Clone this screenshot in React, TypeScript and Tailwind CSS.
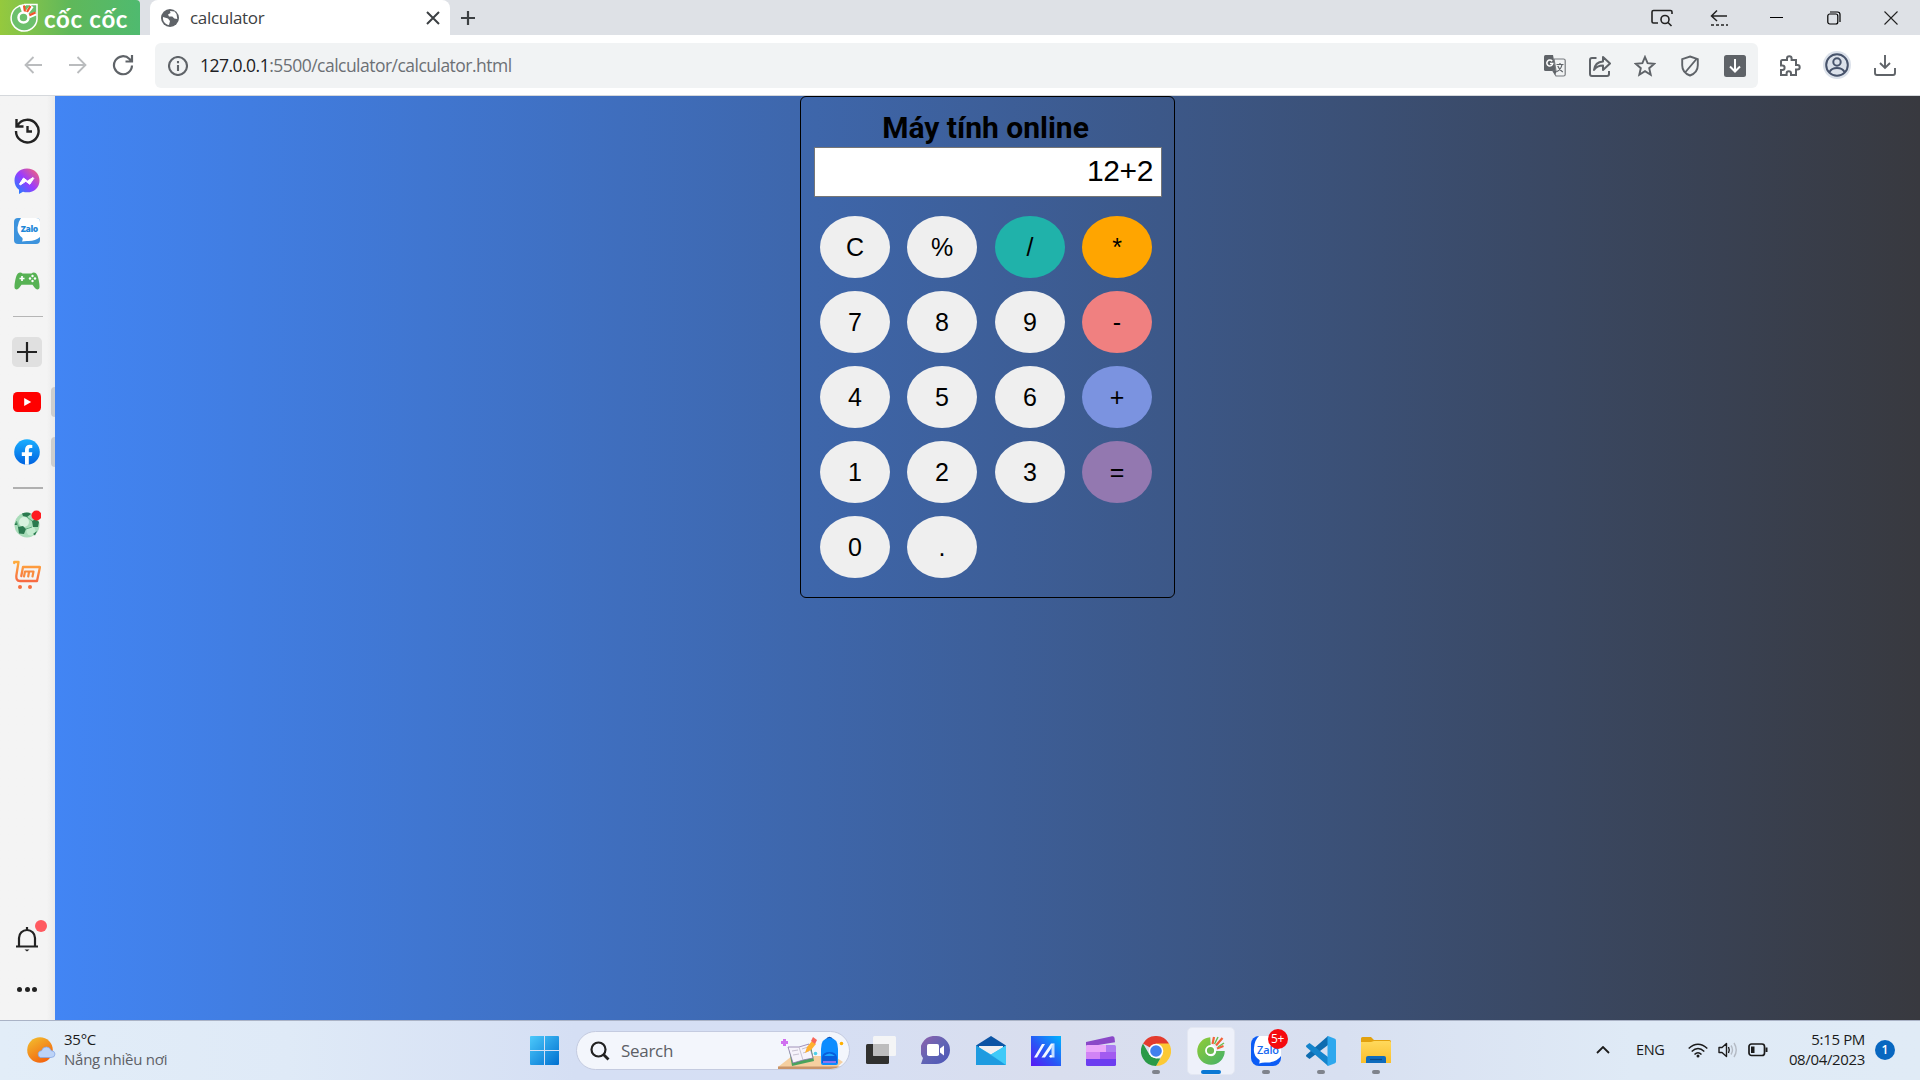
import React from "react";

type Children = { children?: React.ReactNode };

const UI = "font-['Open_Sans','Noto_Sans',sans-serif]";

function Cell({ children, className = "" }: Children & { className?: string }) {
  return <div className={`flex shrink-0 items-center justify-center ${className}`}>{children}</div>;
}

type IconProps = Children & { w?: number; h?: number; sw?: number; color?: string };

function Line({ children, w = 24, h = 24, sw = 2, color = "#5f6368" }: IconProps) {
  return (
    <svg width={w} height={h} viewBox={`0 0 ${w} ${h}`} fill="none" stroke={color} strokeWidth={sw} className="block shrink-0">
      {children}
    </svg>
  );
}

function CocCocLogo() {
  return (
    <div className="flex h-[35px] w-[140px] shrink-0 items-center rounded-tr-[4px] bg-linear-to-r from-[#95c93d] via-[#5fb85a] to-[#4fba6f] pl-[9px]">
      <svg width="30" height="30" viewBox="0 0 30 30" fill="none" className="shrink-0">
        <path d="M17 2.2A13 13 0 1 0 28 13.500L28 1.500H15" stroke="#fff" strokeWidth="1.500" fill="#6cc06c" />
        <path d="M12.500 2L15 9M27 10.500L20 13.500M23 3L17.500 10" stroke="#fff" strokeWidth="4" />
        <path d="M15 2.500L16 9M26.500 9.500L20 12.500M21.500 3L18 9" stroke="#f0532b" strokeWidth="2.200" />
        <circle cx="14.500" cy="14.500" r="5" stroke="#fff" strokeWidth="2.500" />
      </svg>
      <span className="mt-[2px] ml-[5px] font-[Lato,sans-serif] text-[24px] leading-none font-bold tracking-[0.7px] whitespace-nowrap text-white">
        cốc cốc
      </span>
    </div>
  );
}

function TabStrip() {
  return (
    <div className="flex h-[35px] w-full bg-[#dee1e6]">
      <CocCocLogo />
      <div className="ml-[10px] flex w-[300px] items-center rounded-t-[8px] bg-white pl-[11px]">
        <svg width="18" height="18" viewBox="0 0 18 18" className="shrink-0">
          <circle cx="9" cy="9" r="9" fill="#5f6368" />
          <path d="M2 8l5 1.500 2 2.500-1 4C4 15.500 1.500 12 2 8zM9 2l4.500.5L15.500 5l.8 5-3-.5-2-2L8 7.500 7 5.500 9.500 4z" fill="#fff" />
        </svg>
        <span className={`ml-[11px] w-[225px] text-[17px] leading-none tracking-[-0.3px] text-[#3c4043] ${UI}`}>calculator</span>
        <div className="ml-[11px]">
          <Line w={14} h={14} sw={2} color="#3c4043"><path d="M1 1l12 12M13 1L1 13" /></Line>
        </div>
      </div>
      <Cell className="w-[35px]">
        <Line w={16} h={16} sw={2.2} color="#3c4043"><path d="M8 1v14M1 8h14" /></Line>
      </Cell>
      <div className="flex-1" />
      <div className="mr-[0.500px] flex">
        <Cell className="w-[57px]">
          <Line w={22} h={18} sw={1.6} color="#222">
            <path d="M7 14H2.500Q1 14 1 12.500V3Q1 1.500 2.500 1.500H19.500Q21 1.500 21 3V5" />
            <circle cx="14" cy="10.500" r="4" /><path d="M17 13.500l3.500 3.500" />
          </Line>
        </Cell>
        <Cell className="w-[57px]">
          <Line w={18} h={18} sw={1.5} color="#222">
            <path d="M17 7H1.500M7 1.500L1.500 7l5.500 5" /><path d="M1 16h17" strokeDasharray="3 2" />
          </Line>
        </Cell>
        <Cell className="w-[58px]"><div className="h-px w-[13px] bg-black" /></Cell>
        <Cell className="w-[57px]">
          <Line w={14} h={14} sw={1.2} color="#000">
            <rect x=".8" y="3" width="10" height="10" rx="2" /><path d="M3 1h7.500Q13 1 13 3.500V11" />
          </Line>
        </Cell>
        <Cell className="w-[57px]">
          <Line w={14} h={14} sw={1.1} color="#222"><path d="M.5.5l13 13M13.500.5l-13 13" /></Line>
        </Cell>
      </div>
    </div>
  );
}

function Toolbar() {
  return (
    <div className="flex h-[61px] w-full items-center border-b border-[#d5d8dc] bg-white">
      <div className="flex w-[155px] shrink-0 items-center pl-[10px]">
        <Cell className="w-[45px]">
          <Line w={18} h={18} sw={1.8} color="#babcbe"><path d="M18 9H1.500M9.500 1L1.500 9l8 8" /></Line>
        </Cell>
        <Cell className="w-[45px]">
          <Line w={18} h={18} sw={1.8} color="#babcbe"><path d="M0 9h16.500M8.500 1l8 8-8 8" /></Line>
        </Cell>
        <Cell className="w-[45px]">
          <Line w={22} h={22} sw={2.2} color="#5f6368"><path d="M20 11.500A9 9 0 1 1 17.500 5l2 2M20 1v6.500H13.500" /></Line>
        </Cell>
      </div>
      <div className="mt-px flex h-[45px] w-[1603px] shrink-0 items-center rounded-[6px] bg-[#f1f3f4] pl-[13px]">
        <Line w={20} h={20} sw={2.1}><circle cx="10" cy="10" r="9" /><path d="M10 9v6M10 5v2.200" /></Line>
        <span className={`ml-[12px] text-[17.500px] leading-none tracking-[-0.52px] whitespace-nowrap text-[#6c7075] ${UI}`}>
          <span className="text-[#202124]">127.0.0.1</span>:5500/calculator/calculator.html
        </span>
        <div className="mr-px ml-auto flex">
          <Cell className="w-[45px]">
            <svg width="22" height="22" viewBox="0 0 22 22">
              <path d="M1.500 0H9l3 16H1.500Q0 16 0 14.500v-13Q0 0 1.500 0z" fill="#5f6368" />
              <path d="M10 4h9.500q1.700 0 1.700 1.500v14q0 1.500-1.700 1.500H12l-3-5h3z" fill="#f1f3f4" stroke="#777a7e" strokeWidth="1.200" />
              <path d="M9 16h4l-2 4z" fill="#5f6368" />
              <path d="M8.200 6.200A3 3 0 1 0 8.800 8.500H6" fill="none" stroke="#fff" strokeWidth="1.500" />
              <path d="M12.500 9.500h7M16 8v1.500M18 9.500q-1 5-5 7M13.800 11q1.500 4 5 6" fill="none" stroke="#5f6368" strokeWidth="1.200" />
            </svg>
          </Cell>
          <Cell className="w-[45px]">
            <Line w={22} h={22} sw={2}>
              <path d="M7.500 3H3Q1 3 1 5v14q0 2 2 2h15q2 0 2-2v-3" />
              <path d="M5 15q1-8 9-8.500V2l7 6.500-7 6.500v-4.500q-6 0-9 4.500z" strokeLinejoin="round" />
            </Line>
          </Cell>
          <Cell className="w-[45px]">
            <Line w={22} h={22} sw={1.9}><path d="M11 2l2.600 6.200 6.700.6-5.100 4.400 1.500 6.500L11 16.200l-5.700 3.500 1.500-6.500-5.100-4.400 6.700-.6z" /></Line>
          </Cell>
          <Cell className="w-[45px]">
            <Line w={20} h={22} sw={1.900}><path d="M10 1.500l7.800 2.700v6c0 4.800-3 8.500-7.800 10.300-4.800-1.800-7.800-5.500-7.800-10.300v-6zM5.500 17L16.500 4" /></Line>
          </Cell>
          <Cell className="w-[45px]">
            <svg width="22" height="22" viewBox="0 0 22 22">
              <rect width="22" height="22" rx="2.500" fill="#5f6368" />
              <path d="M11 4v12.500M6 11.500l5 5 5-5" fill="none" stroke="#fff" strokeWidth="2" />
            </svg>
          </Cell>
        </div>
      </div>
      <div className="flex pl-[9px]">
        <Cell className="w-[46px]">
          <svg width="24" height="24" viewBox="0 0 24 24" fill="none" stroke="#5f6368" strokeWidth="2" className="mt-px">
            <path d="M4.500 6H9V4.500a2.300 2.300 0 0 1 4.600 0V6H18v5h1.500a2.200 2.200 0 0 1 0 4.400H18V21h-5v-1.500a2.200 2.200 0 0 0-4.400 0V21H3v-5h1.300a2.300 2.300 0 0 0 0-4.600H3V7.500Q3 6 4.500 6z" />
          </svg>
        </Cell>
        <Cell className="w-[47px]">
          <svg width="28" height="28" viewBox="0 0 28 28" fill="none" stroke="#47536b" strokeWidth="2" className="mb-px">
            <circle cx="14" cy="14" r="14" fill="#dbe1ea" stroke="none" />
            <circle cx="14" cy="14" r="10.800" /><circle cx="14" cy="11" r="3.700" />
            <path d="M6.500 21q2-4 7.500-4t7.500 4" />
          </svg>
        </Cell>
        <Cell className="w-[49px]">
          <Line w={22} h={22} sw={1.900}><path d="M11 1v12.500M6 9l5 5 5-5M1 14v5q0 2 2 2h16q2 0 2-2v-5" /></Line>
        </Cell>
      </div>
    </div>
  );
}

function Sidebar() {
  const cell = "h-[50px] w-full relative pr-px";
  return (
    <aside className="flex w-[55px] shrink-0 flex-col bg-linear-to-r from-[#f4f4f4] from-85% to-[#eaeaea] pt-[10px]">
      <Cell className={cell}>
        <Line w={26} h={26} sw={2.400} color="#222">
          <path d="M3.500 7.500A11.300 11.300 0 1 1 2 13M2.500 1v7.500H9.500M13.500 8v5.500H18" />
        </Line>
      </Cell>
      <Cell className={cell}>
        <svg width="26" height="27" viewBox="0 0 26 27">
          <defs>
            <linearGradient id="msg" x1="0" y1="1" x2="1" y2="0">
              <stop offset="0" stopColor="#0a8dff" /><stop offset=".5" stopColor="#9a3bff" /><stop offset="1" stopColor="#ff6a68" />
            </linearGradient>
          </defs>
          <path d="M13 .5C5.500.5.5 5.800.5 12.500c0 4 1.600 7 4.500 9.200V26l4-2.200c1.300.4 2.600.5 4 .5 7.500 0 12.500-5.200 12.500-11.900S20.500.5 13 .5z" fill="url(#msg)" />
          <path d="M5.500 16l4-6 4 3 5.500-3.500.8.8-4 6-4-3L6.300 17z" fill="#fff" stroke="#fff" strokeWidth="1" strokeLinejoin="round" />
        </svg>
      </Cell>
      <Cell className={cell}>
        <svg width="26" height="26" viewBox="0 0 26 26">
          <rect width="26" height="26" rx="4" fill="#3c93dd" />
          <path d="M7 0H22q4 0 4 4v15q-5 4.500-13 4-3 0-5 .5 1-2 .5-3.500Q3 16 3.500 9.500 4 4 7 0z" fill="#fff" />
          <text x="15.500" y="14" fontSize="8.500" fontWeight="800" fontFamily="Open Sans" textAnchor="middle" fill="#1f88d8" textLength="17.500">Zalo</text>
        </svg>
      </Cell>
      <Cell className={cell}>
        <svg width="26" height="18" viewBox="0 0 26 18">
          <path d="M5 .8Q7 0 8.500 1.500h9Q19 0 21 .8q2.500.8 3.700 7.200 1.500 7.500.3 8.800-2 2-4.500-1.300l-2-2.800h-11l-2 2.800Q3 18.800 1 16.800-.2 15.500 1.300 8 2.500 1.600 5 .8z" fill="#57b254" />
          <path d="M8 4v5M5.500 6.500h5" stroke="#fff" strokeWidth="1.700" />
          <g fill="#fff"><circle cx="18.500" cy="4" r="1.200" /><circle cx="18.500" cy="9" r="1.200" /><circle cx="16" cy="6.500" r="1.200" /><circle cx="21" cy="6.500" r="1.200" /></g>
        </svg>
      </Cell>
      <Cell className="h-[21px]"><div className="h-px w-[30px] bg-[#b5b5b5]" /></Cell>
      <Cell className={cell}>
        <div className="flex size-[30px] items-center justify-center rounded-[5px] bg-[#e0e0e0]">
          <Line w={20} h={20} sw={2.200} color="#222"><path d="M10 0v20M0 10h20" /></Line>
        </div>
      </Cell>
      <Cell className={cell}>
        <svg width="28" height="20" viewBox="0 0 28 20">
          <rect width="28" height="20" rx="4.500" fill="#f00" /><path d="M11.200 6v8l7-4z" fill="#fff" />
        </svg>
        <div className="absolute top-[10px] right-0 h-[30px] w-[4px] rounded-l-[4px] bg-[#cdcdcd]" />
      </Cell>
      <Cell className={cell}>
        <svg width="26" height="26" viewBox="0 0 26 26">
          <defs><linearGradient id="fb" x1="0" y1="0" x2="0" y2="1"><stop stopColor="#1aafff" /><stop offset="1" stopColor="#0062e0" /></linearGradient></defs>
          <circle cx="13" cy="13" r="12.800" fill="url(#fb)" />
          <path d="M11 25.700V17H7.800v-3.700H11v-2.500c0-3.300 2-5.100 4.900-5.100l2.400.2v3.200h-1.600c-1.500 0-1.900.9-1.900 1.900v2.300h3.500l-.6 3.700H14.800v8.700z" fill="#fff" />
        </svg>
        <div className="absolute top-[10px] right-0 h-[30px] w-[4px] rounded-l-[4px] bg-[#cdcdcd]" />
      </Cell>
      <Cell className="h-[22px]"><div className="h-[2px] w-[30px] bg-[#b0b0b0]" /></Cell>
      <Cell className={cell}>
        <svg width="28" height="28" viewBox="0 0 28 28">
          <circle cx="14" cy="15" r="12.500" fill="#a8dcb9" />
          <circle cx="11" cy="12" r="5" fill="#d7f2df" /><circle cx="18" cy="21" r="4.500" fill="#c3ebcf" />
          <path d="M5 17l5-1 3 3-2 5-5-.500zM19 11l4-2 3 3-1 5-5 0zM9 3.500q6-2 9 .5l-4 3-4-1zM20 24l4-3-2 4.500zM1.500 15l2-4 .5 4z" fill="#2a7a4f" />
          <path d="M13 19l6-2M14 7l5 4M3.500 11l2 6" stroke="#5fae7e" strokeWidth="1" />
          <circle cx="23.500" cy="5.500" r="5" fill="#ff1c20" />
        </svg>
      </Cell>
      <Cell className={cell}>
        <svg width="28" height="29" viewBox="0 0 28 29" fill="none" strokeLinecap="round" strokeLinejoin="round">
          <defs><linearGradient id="cart" x1="0" y1="0" x2="0" y2="1"><stop stopColor="#ffac3d" /><stop offset="1" stopColor="#f76a42" /></linearGradient></defs>
          <path d="M1.200 3V2H5.500L3.500 14.500Q2.500 21 7 21H24L27 7H10L8.300 16" stroke="url(#cart)" strokeWidth="2.300" />
          <path d="M11 16.500l1-5h8.500l-1 5M16 12l-.8 4.500" stroke="#f98b3e" strokeWidth="2.200" />
          <circle cx="7" cy="27" r="2" fill="#f5703f" /><circle cx="17" cy="27" r="2" fill="#f5703f" />
        </svg>
      </Cell>
      <div className="flex-1" />
      <Cell className={cell}>
        <Line w={24} h={26} sw={2.200} color="#222">
          <path d="M4 20v-8a8 8 0 0 1 16 0v8M1 20.500h22M12 1v3" />
          <path d="M9.500 23.500h5L12 25.500z" fill="#222" stroke="none" />
        </Line>
        <div className="absolute top-[6px] left-[35px] size-[12px] rounded-full bg-[#ff5a60]" />
      </Cell>
      <Cell className="mb-[6px] h-[50px] gap-[2.500px] pr-px">
        <div className="size-[5px] rounded-full bg-[#222]" />
        <div className="size-[5px] rounded-full bg-[#222]" />
        <div className="size-[5px] rounded-full bg-[#222]" />
      </Cell>
    </aside>
  );
}

const KEYS: [string, string][] = [
  ["C", "bg-[#efefef]"], ["%", "bg-[#efefef]"], ["/", "bg-[#20b2aa]"], ["*", "bg-[#ffa500]"],
  ["7", "bg-[#efefef]"], ["8", "bg-[#efefef]"], ["9", "bg-[#efefef]"], ["-", "bg-[#f08080]"],
  ["4", "bg-[#efefef]"], ["5", "bg-[#efefef]"], ["6", "bg-[#efefef]"], ["+", "bg-[#7b93e0]"],
  ["1", "bg-[#efefef]"], ["2", "bg-[#efefef]"], ["3", "bg-[#efefef]"], ["=", "bg-[#9378b0]"],
  ["0", "bg-[#efefef]"], [".", "bg-[#efefef]"],
];

function Calculator() {
  return (
    <div className="ml-[745px] h-[502px] w-[375px] rounded-[6px] border border-black pt-[13px] pl-[13px]">
      <h1 className="w-[343px] text-center font-[Roboto,sans-serif] text-[30px] leading-[36px] font-bold text-black">Máy tính online</h1>
      <div className="mt-px flex h-[50px] w-[348px] items-center justify-end border border-[#767676] bg-white pr-[8px] pb-[2px] font-['Liberation_Sans',sans-serif] text-[30px] leading-none tracking-[-0.4px] text-black">
        12+2
      </div>
      <div className="mt-[19px] ml-[6px] grid grid-cols-[87px_88px_87px_70px] gap-y-[13px] font-['Liberation_Sans',sans-serif] text-[25px] text-black">
        {KEYS.map(([label, color]) => (
          <button key={label} className={`flex h-[62px] w-[70px] items-center justify-center rounded-[50%] leading-none ${color}`}>
            {label}
          </button>
        ))}
      </div>
    </div>
  );
}

function Running() {
  return <div className="absolute bottom-[6px] left-1/2 h-[4px] w-[8px] -translate-x-1/2 rounded-full bg-[#7f838c]" />;
}

function SearchBox() {
  return (
    <div className="ml-[4px] flex h-[39px] w-[274px] shrink-0 items-center overflow-hidden rounded-full border border-[#c4cbe0] bg-[#f3f6fc] pl-[13px]">
      <Line w={20} h={20} sw={2.200} color="#222"><circle cx="8.500" cy="8.500" r="7" /><path d="M13.500 13.500l5 5" strokeWidth="2.800" /></Line>
      <span className={`ml-[11px] text-[17px] leading-none tracking-[-0.3px] text-[#5c5f66] ${UI}`}>Search</span>
      <svg width="70" height="37" viewBox="0 0 70 37" className="mr-px ml-auto shrink-0">
        <path d="M0 35L14 24H56L65 30 58 36H0z" fill="#f5cfa0" /><path d="M0 34.500h62l-3 2.500H0z" fill="#c99468" />
        <path d="M11 17l22-3 3 15-22 5z" fill="#4aa35c" /><path d="M10 15l11 0 10-3 4 14-10 2-10 3z" fill="#f6f3fb" stroke="#8a78a8" strokeWidth=".8" />
        <path d="M21 15l4 13M14 19l6-1M15 23l6-1M24 17l6-2M25 21l6-2" stroke="#c2bccb" strokeWidth=".9" />
        <path d="M27 21l2-6 5-6 4 3-5 6z" fill="#ffb02e" /><path d="M33 9l2-4 4 3-2 4z" fill="#f8675a" />
        <path d="M6.500 7v7M3 10.500h7" stroke="#d070f0" strokeWidth="3" /><circle cx="37.500" cy="21.500" r="1.800" fill="#4dd0e8" /><circle cx="63.500" cy="11.500" r="1.800" fill="#ffb000" />
        <path d="M48 8.500q3.500-6 7 0" stroke="#0d4fb0" strokeWidth="1.500" fill="none" />
        <path d="M43 17q0-11 8.500-11T60 17v14q0 2-2 2H45q-2 0-2-2z" fill="#0c8cff" /><path d="M44 31v-6q1-5 7.500-5t7.500 5v6z" fill="#0a5edc" /><path d="M46 24q5.500-5 11 0z" fill="#1ea5ff" /><path d="M45 30h13" stroke="#b77cf5" strokeWidth="1.500" />
      </svg>
    </div>
  );
}

function Taskbar() {
  const app = "h-full w-[55px] relative";
  return (
    <footer className="flex h-[60px] w-full items-center border-t border-[#aab3c6] bg-[linear-gradient(90deg,#e2edf8_0%,#dfeaf7_15%,#d5dff4_30%,#d6dff4_42%,#d9deee_55%,#d8e0f1_70%,#dfeaf6_85%,#e0ebf6_100%)]">
      <div className="flex w-[517px] shrink-0 items-center pl-[27px]">
        <svg width="29" height="28" viewBox="0 0 29 28" className="shrink-0">
          <defs><linearGradient id="sun" x1="0" y1="0" x2=".6" y2="1"><stop stopColor="#f2c230" /><stop offset="1" stopColor="#f3650f" /></linearGradient></defs>
          <circle cx="13" cy="13" r="12.800" fill="url(#sun)" />
          <path d="M13.500 20.500a3.500 3.500 0 0 1 1-6.800q1.500-4 5-3.700 3.500 0 4.500 3.500 4 .5 4 3.500 0 3.500-4 3.500z" fill="#bcd3f7" stroke="#86a8e6" strokeWidth=".8" />
        </svg>
        <div className={`mb-[4px] ml-[8px] text-[15px] leading-[20px] tracking-[-0.25px] whitespace-nowrap ${UI}`}>
          <div className="text-[#1b1b1b]">35°C</div>
          <div className="text-[#5d6066]">Nắng nhiều nơi</div>
        </div>
      </div>
      <Cell className={app}>
        <svg width="29" height="29" viewBox="0 0 29 29">
          <defs><linearGradient id="win" x1="0" y1="0" x2="1" y2="1"><stop stopColor="#4cc9fb" /><stop offset="1" stopColor="#0070d0" /></linearGradient></defs>
          <path d="M0 1q0-1 1-1h13v14H0zM15 0h13q1 0 1 1v13H15zM0 15h14v14H1q-1 0-1-1zM15 15h14v13q0 1-1 1H15z" fill="url(#win)" />
        </svg>
      </Cell>
      <SearchBox />
      <div className="ml-[3.500px] flex h-full shrink-0">
        <Cell className={app}>
          <svg width="30" height="29" viewBox="0 0 30 29">
            <rect y="8" width="23" height="20" rx="1.500" fill="#31312f" /><rect x="7" width="23" height="20" rx="1.500" fill="#f5f5f5" opacity=".95" />
            <path d="M7 8h16v12H8.500Q7 20 7 18.500z" fill="#bdbdbd" />
          </svg>
        </Cell>
        <Cell className={`${app} pr-px`}>
          <svg width="29" height="29" viewBox="0 0 29 29">
            <defs><linearGradient id="chat" x1="0" y1="0" x2="1" y2="1"><stop stopColor="#9160ac" /><stop offset=".5" stopColor="#6264b4" /><stop offset="1" stopColor="#4b55b8" /></linearGradient></defs>
            <path d="M14.500 0A14 14 0 0 1 29 14 14 14 0 0 1 14.500 28H0l2-6A14 14 0 0 1 14.500 0z" fill="url(#chat)" />
            <rect x="6" y="8" width="12" height="12" rx="1.800" fill="#fff" /><path d="M19 12.500l4-3v10l-4-3z" fill="#fff" />
          </svg>
        </Cell>
        <Cell className={app}>
          <svg width="30" height="29" viewBox="0 0 30 29">
            <path d="M0 9.500L15 0l15 9.500V14H0z" fill="#0c54a4" /><path d="M3 10h24v8H3z" fill="#f0f0f2" />
            <path d="M0 9.500L15 18.500 30 9.500V29H0z" fill="#2fb7ef" /><path d="M0 9.500L30 29H0z" fill="#1e9be0" /><path d="M30 9.500L15 18.500 30 29z" fill="#3fcaf8" />
          </svg>
        </Cell>
        <Cell className={app}>
          <svg width="30" height="30" viewBox="0 0 30 30">
            <defs><linearGradient id="asus" x1="0" y1="1" x2="1" y2="0"><stop stopColor="#5a17f5" /><stop offset=".45" stopColor="#2a55f5" /><stop offset="1" stopColor="#00b4ff" /></linearGradient></defs>
            <rect width="30" height="30" fill="url(#asus)" />
            <path d="M3 21.500L11 8h3L6 21.500zM10.500 21.500L20 7.500h3.500L14 21.500z" fill="#f4f8ff" /><path d="M20.500 10l3-2.500V21.500h-3z" fill="#c2ddff" /><circle cx="19.800" cy="20.300" r="1.400" fill="#fff" />
          </svg>
        </Cell>
        <Cell className={app}>
          <svg width="30" height="30" viewBox="0 0 30 30">
            <path d="M0 6L26 .3q2-.5 2.500 1.500l.5 4.500L0 11z" fill="#8a48c8" />
            <path d="M1.500 9H28.500Q30 9 30 10.500V16H0V10.500Q0 9 1.500 9z" fill="#ad7cf2" /><path d="M0 10q0-1 1.500-1H20v7H0z" fill="#eaa6fa" />
            <path d="M0 16h30v7H0z" fill="#a25bf0" /><path d="M0 16h14v7H0z" fill="#d183f5" /><path d="M0 23h30v5.500q0 1.500-1.500 1.500h-27Q0 30 0 28.500z" fill="#6c3df0" />
          </svg>
        </Cell>
        <Cell className={app}>
          <svg width="30" height="30" viewBox="0 0 30 30">
            <path d="M15 15L2 7.500A15 15 0 0 1 28 7.500z" fill="#e33b2e" />
            <path d="M15 7.500H28A15 15 0 0 1 15 30L21.500 18.800z" fill="#fcc934" />
            <path d="M2 7.500L8.500 18.800 15 22.500h4.300L15 30A15 15 0 0 1 2 7.500z" fill="#2a9a48" />
            <circle cx="15" cy="15" r="7.300" fill="#fff" /><circle cx="15" cy="15" r="5.800" fill="#4080ee" />
          </svg>
          <Running />
        </Cell>
        <Cell className={app}>
          <div className="flex size-[48px] items-center justify-center rounded-[5px] border border-[#e3e7f2] bg-[#eef1fa]">
            <svg width="28" height="29" viewBox="0 0 28 29" fill="none">
              <defs><linearGradient id="cc" x1="0" y1="0" x2="1" y2="1"><stop stopColor="#86c83e" /><stop offset="1" stopColor="#4fb561" /></linearGradient></defs>
              <path d="M13.500 5.500A9.500 9.500 0 1 0 23.500 15" stroke="url(#cc)" strokeWidth="8.500" />
              <circle cx="13.500" cy="14.500" r="4.500" fill="#6bbd52" stroke="#fff" strokeWidth="1.800" />
              <path d="M15.500 8L17 1M19 9.500L25.500 2M20 12.500L26.500 10" stroke="#f2633a" strokeWidth="2.200" /><path d="M17.500 8L21 1M21 11l6-4" stroke="#6bbd52" strokeWidth="1.500" />
            </svg>
          </div>
          <div className="absolute bottom-[6px] left-1/2 h-[4px] w-[20px] -translate-x-1/2 rounded-full bg-[#0a78d4]" />
        </Cell>
        <Cell className={app}>
          <svg width="30" height="30" viewBox="0 0 30 30">
            <rect width="30" height="30" rx="8" fill="#0b5cf5" />
            <path d="M8 0H22q8 0 8 8v12q-5 7-16 6.500-3 0-6 1 1-2 .5-3.500Q2 20 3 12 3.500 4 8 0z" fill="#fff" />
            <text x="17" y="17.500" fontSize="11" fontWeight="600" fontFamily="Open Sans" textAnchor="middle" fill="#1668f0" textLength="22">Zalo</text>
          </svg>
          <div className={`absolute top-[8px] left-[29px] flex size-[20px] items-center justify-center rounded-full bg-[#f50a0f] text-[12px] leading-none tracking-[-0.3px] text-white ${UI}`}>5+</div>
          <Running />
        </Cell>
        <Cell className={app}>
          <svg width="30" height="30" viewBox="0 0 30 30">
            <path d="M22 0v9L3.500 23 .5 20.800q-1-1 0-2z" fill="#0e6cb0" /><path d="M.5 11.200q-1-1 0-2L3.500 7 22 21v9L21 29z" fill="#1484cc" />
            <path d="M22 0l7 2.800q1 .5 1 1.700v21q0 1.200-1 1.700L22 30q-.5-.3-.5-1V1q0-.7.500-1z" fill="#2ea8ee" />
          </svg>
          <Running />
        </Cell>
        <Cell className={app}>
          <svg width="30" height="27" viewBox="0 0 30 27">
            <defs><linearGradient id="dir" x1="0" y1="0" x2="0" y2="1"><stop stopColor="#ffd95c" /><stop offset="1" stopColor="#fabf2c" /></linearGradient></defs>
            <path d="M0 1.500Q0 0 1.500 0H10l3 3h15.500Q30 3 30 4.500V10H0z" fill="#e2a10e" />
            <path d="M0 5h10l3-1h15.500Q30 4 30 5.500V26H0z" fill="url(#dir)" />
            <path d="M5 26v-5q0-2 2-2h16q2 0 2 2v5z" fill="#0f6cbd" /><path d="M9 22.500h12" stroke="#0a4a88" strokeWidth="1.200" />
          </svg>
          <Running />
        </Cell>
      </div>
      <div className="flex-1" />
      <div className={`mr-[25px] flex h-full shrink-0 items-center pb-px text-[15px] text-[#1b1b1b] ${UI}`}>
        <Line w={14} h={8} sw={1.800} color="#1b1b1b"><path d="M1 7l6-6 6 6" /></Line>
        <span className="ml-[26px] w-[33px] text-[14.500px] leading-none tracking-[-0.4px]">ENG</span>
        <div className="ml-[19px] flex items-center gap-[10px]">
          <Line w={20} h={15} sw={1.500} color="#1b1b1b">
            <path d="M.7 5.500q9.300-8.500 18.600 0M3.700 8.500q6.300-6 12.600 0M6.500 11.500q3.500-3.500 7 0" /><circle cx="10" cy="13" r="1.500" fill="#1b1b1b" stroke="none" />
          </Line>
          <Line w={20} h={18} sw={1.400} color="#1b1b1b">
            <path d="M1 6.500h3l4.500-4v13l-4.500-4H1zM10.500 6q1.500 3 0 6" strokeLinejoin="round" /><path d="M13 4.500q3 4.500 0 9M16 2q4.500 7 0 14" stroke="#b4bac4" />
          </Line>
          <Line w={20} h={14} sw={1.700} color="#1b1b1b">
            <rect x="1" y="1" width="15.500" height="11.500" rx="2.500" /><path d="M3 3.500h3.500v6.500H3z" fill="#1b1b1b" stroke="none" /><path d="M18.500 4.500v4.500" strokeWidth="2" />
          </Line>
        </div>
        <div className="mb-[3px] w-[97px] text-right leading-[20px] tracking-[-0.35px] whitespace-nowrap">
          <div>5:15 PM</div>
          <div>08/04/2023</div>
        </div>
        <div className="ml-[10px] flex size-[20px] items-center justify-center rounded-full bg-[#0867c0] text-[12px] leading-none font-semibold text-white">1</div>
      </div>
    </footer>
  );
}

export default function App() {
  return (
    <div className="flex h-[1080px] w-[1920px] flex-col overflow-hidden">
      <TabStrip />
      <Toolbar />
      <div className="flex h-[924px] w-full">
        <Sidebar />
        <main className="w-[1865px] shrink-0 bg-[linear-gradient(90deg,#4285f4_0%,#38393f_100%)]">
          <Calculator />
        </main>
      </div>
      <Taskbar />
    </div>
  );
}
